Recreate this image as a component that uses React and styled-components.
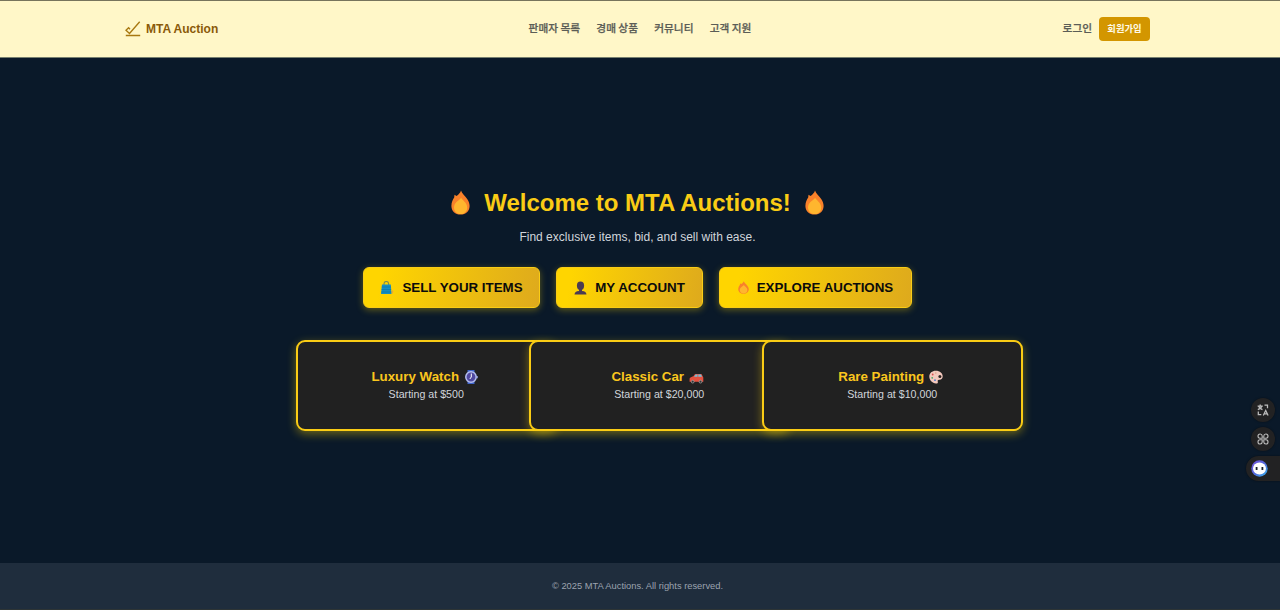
import React from "react";
import styled, { createGlobalStyle } from "styled-components";

const Global = createGlobalStyle`
  * { box-sizing: border-box; }
  body { margin: 0; background: #0a1929; font-family: "Liberation Sans", Arial, "Noto Sans CJK KR", sans-serif; }
  h1, h3, p { margin: 0; }
  svg { display: block; flex: none; }
`;

const Page = styled.div`
  height: 610px;
  display: flex;
  flex-direction: column;
  overflow: hidden;
  border-top: 1px solid #77745c;
  border-bottom: 1px solid #2d3435;
`;

const Header = styled.header`
  height: 57px;
  flex: none;
  padding-right: 5px;
  background: #fff7c8;
  border-bottom: 1px solid #77806f;
`;

const HeaderInner = styled.div`
  width: 1025px;
  height: 55px;
  margin: 0 auto;
  display: grid;
  grid-template-columns: 1fr auto 1fr;
  align-items: center;
`;

const Brand = styled.a`
  display: flex;
  align-items: center;
  gap: 5px;
  color: #8a5a08;
  font-size: 12px;
  font-weight: 700;
`;

const Nav = styled.nav`
  display: flex;
  gap: 16.3px;
  margin-left: 5px;
`;

const NavLink = styled.a`
  padding-bottom: 2px;
  color: #5b5d56;
  font: 500 10.67px/16px "Noto Sans CJK KR", sans-serif;
  -webkit-text-stroke: 0.25px #5b5d56;
  white-space: nowrap;
`;

const Account = styled.div`
  display: flex;
  justify-content: flex-end;
  align-items: center;
  gap: 7px;
`;

const SignUp = styled.button`
  width: 51px;
  height: 24px;
  padding: 0 0 1px;
  border: 0;
  border-radius: 4px;
  background: #d39600;
  color: #fffbe8;
  font: 700 9.33px/23px "Noto Sans CJK KR", sans-serif;
`;

const Hero = styled.main`
  flex: 1;
  padding: 129px 5px 0 0;
  display: flex;
  flex-direction: column;
  align-items: center;
`;

const Title = styled.h1`
  display: flex;
  align-items: center;
  gap: 14px;
  height: 32px;
  color: #facc15;
  font-size: 24px;
  line-height: 32px;
  white-space: nowrap;

  svg { margin-bottom: 1px; }
`;

const Subtitle = styled.p`
  margin-top: 9px;
  color: #d1d5db;
  font-size: 12px;
  line-height: 18px;
`;

const Actions = styled.div`
  margin-top: 21px;
  display: flex;
  gap: 16px;
`;

const Action = styled.button`
  width: ${(p) => p.$width}px;
  height: 41px;
  padding: 0;
  display: flex;
  align-items: center;
  justify-content: center;
  gap: 8px;
  border: 1.5px solid #facc15;
  border-radius: 6px;
  background: linear-gradient(100deg, #ffd500 10%, #daa520 110%);
  box-shadow: 0 2px 7px rgba(255, 215, 0, 0.35);
  color: #0b0b0b;
  font: 700 13.33px "Liberation Sans", Arial, sans-serif;
  white-space: nowrap;
`;

const Cards = styled.section`
  width: 683px;
  margin-top: 32px;
  display: grid;
  grid-template-columns: repeat(3, minmax(0, 1fr));
  gap: 16px;
`;

const Card = styled.article`
  width: 260.5px;
  height: 91px;
  padding: 26px 0;
  border: 2px solid #facc15;
  border-radius: 9px;
  background: #212121;
  box-shadow: 0 3px 10px rgba(255, 215, 0, 0.4);
  text-align: center;
`;

const CardTitle = styled.h3`
  display: flex;
  justify-content: center;
  align-items: center;
  gap: 5px;
  padding-right: 3px;
  color: #fac61e;
  font-size: 13.33px;
  line-height: 18px;
`;

const Price = styled.p`
  color: #d1d5db;
  font-size: 10.67px;
  line-height: 16px;
`;

const Footer = styled.footer`
  height: 46px;
  flex: none;
  padding-right: 5px;
  background: #1f2d3d;
  color: #9ca3af;
  font-size: 9.33px;
  line-height: 46px;
  text-align: center;
`;

const Tools = styled.aside`
  position: fixed;
  right: 0;
  top: 398px;
  display: flex;
  flex-direction: column;
  align-items: flex-end;
  gap: 5px;
`;

const Tool = styled.div`
  width: 24px;
  height: 24px;
  margin-right: 5px;
  display: grid;
  place-items: center;
  border-radius: 50%;
  background: #222223;
  box-shadow: 0 0 2px rgba(0, 0, 0, 0.5);
`;

const AssistantTab = styled(Tool)`
  width: 34px;
  height: 25px;
  margin-right: 0;
  padding-left: 5px;
  justify-items: start;
  border-radius: 13px 0 0 13px;
`;

const Gavel = () => (
  <svg width="16" height="16" viewBox="0 0 16 16" fill="none" stroke="#a87810" strokeWidth="1.35">
    <path d="M14.700.7 4.500 12.500 1 9.300 3.600 6.700 5 8.200M.8 14.500h14.400" />
  </svg>
);

const Flame = ({ w = 19, h = 25 }) => (
  <svg width={w} height={h} viewBox="0 0 19 25" preserveAspectRatio="none">
    <path d="M10 .4C11 4 14 5.500 16.200 9 17.800 11.500 18.600 13.500 18.600 16c0 5-3.800 8.600-9.100 8.600S.4 21 .4 16C.4 12 2 9.500 3.200 7.500L3.500 4.800 5.500 6C7.500 4.500 9.400 2.700 10 .4Z" fill="#f9812a" />
    <path d="M10.200 7.800c.8 2.500 6 4.700 6 9.600 0 4-2.800 6.600-6.600 6.600S3 21.300 3 17.500c0-2.700 1.200-4.200 2.700-5.700 1.800-1.700 3.500-2.300 4.500-4Z" fill="#ffb62e" />
  </svg>
);

const Bag = () => (
  <svg width="14" height="14" viewBox="0 0 14 14">
    <path d="M4 4.500V2.800a2.300 2.300 0 0 1 4.600 0v1.700" fill="none" stroke="#7b8b52" strokeWidth="1.100" />
    <path d="M2 3.500h8.800l.7 9.500H1Z" fill="#148fc4" />
    <path d="M1.800 6h9M1.600 8.500h9.500M1.300 11h10" stroke="#0877aa" strokeWidth=".7" />
    <path d="m11.800 9 1.500 1-.5 2.500h-1Z" fill="#e9a43d" />
  </svg>
);

const Person = () => (
  <svg width="13" height="14" viewBox="0 0 13 14" fill="#4b3b52">
    <ellipse cx="6.500" cy="4.800" rx="3.600" ry="4.200" />
    <path d="M5 8h3v2c3 .2 4.200 1.400 4.500 3.400H.5C.8 11.400 2 10.200 5 10Z" />
  </svg>
);

const Watch = () => (
  <svg width="14" height="14" viewBox="0 0 14 14">
    <path d="M3.500 0h7v14h-7Z" fill="#3f64c8" />
    <path d="M12.500 6h1.300v2.200h-1.300Z" fill="#8f9ee6" />
    <circle cx="7" cy="7" r="5.200" fill="#5049a0" stroke="#b5bff0" strokeWidth="1.500" />
    <path d="M7.300 3.500V7L5.800 9" fill="none" stroke="#fff" />
  </svg>
);

const Car = () => (
  <svg width="15" height="14" viewBox="0 0 15 14">
    <path d="M.6 8.500C1.500 7 3.500 6.600 4.300 6.300L6 4h6.500L14.300 7.500v4.300H.6Z" fill="#e5513f" />
    <path d="M5 6.700 6.700 4.600h1.800v2.100ZM9.300 4.600H12l1.100 2.100H9.300Z" fill="#75bdd5" />
    <circle cx="3.700" cy="11.700" r="1.400" fill="#333" stroke="#bbb" strokeWidth=".6" />
    <circle cx="11.500" cy="11.700" r="1.400" fill="#333" stroke="#bbb" strokeWidth=".6" />
  </svg>
);

const Palette = () => (
  <svg width="14" height="14" viewBox="0 0 14 14">
    <path d="M6.800.8c4.200 0 6.900 2.500 6.900 5.500 0 2.300-1.500 3.700-3.400 3.500-1.400-.1-1.900.8-1.500 1.900.4 1.200-.4 2-1.800 1.800C3.200 13.100.3 10 .3 6.500.3 3.100 3 .8 6.800.8Z" fill="#f3c8bd" />
    <circle cx="10.900" cy="6.500" r="1.500" fill="#29221f" />
    <circle cx="3.700" cy="4.500" r=".9" fill="#d94f4f" />
    <circle cx="6.800" cy="3" r=".7" fill="#d99e7a" />
    <circle cx="3.200" cy="7.800" r=".9" fill="#45a568" />
    <circle cx="6" cy="10.200" r=".9" fill="#4a77cc" />
  </svg>
);

const Translate = () => (
  <svg width="12" height="12" viewBox="0 0 12 12" fill="none" stroke="#bcbcbc" strokeWidth="1.250">
    <path d="M.6 2h5.200M3.200.5V2M.8 5.700C3.200 4.800 4.500 3.700 5 2M1.500 2.300C2.300 4 3.500 5 5.500 5.700M7.500 1.200h3v3M1.300 7.500v3h3M6.300 11.500 8.700 6.500l2.400 5M7.300 9.900h2.900" />
  </svg>
);

const Grid = () => (
  <svg width="12" height="12" viewBox="0 0 12 12" fill="none" stroke="#bcbcbc" strokeWidth="1.100">
    <path d="M5.200 5.200H3a2.100 2.100 0 1 1 2.200-2.200ZM6.800 5.200V3A2.100 2.100 0 1 1 9 5.200ZM5.200 6.800V9A2.100 2.100 0 1 1 3 6.800ZM6.800 6.800H9A2.100 2.100 0 1 1 6.800 9Z" />
  </svg>
);

const Robot = () => (
  <svg width="17" height="17" viewBox="0 0 17 17">
    <defs>
      <linearGradient id="ring" x1="0" y1="0" x2="1" y2="1">
        <stop offset="0" stopColor="#7551dc" />
        <stop offset=".5" stopColor="#5267dc" />
        <stop offset="1" stopColor="#35b6ed" />
      </linearGradient>
    </defs>
    <circle cx="8.500" cy="8.500" r="8.200" fill="url(#ring)" />
    <ellipse cx="8.500" cy="8.500" rx="6.500" ry="5.900" fill="#fff" />
    <path d="M5.600 7v3M11.400 7v3" stroke="#18202b" strokeWidth="1.800" />
  </svg>
);

const links = ["판매자 목록", "경매 상품", "커뮤니티", "고객 지원"];
const actions = [
  { label: "SELL YOUR ITEMS", width: 177, icon: <Bag /> },
  { label: "MY ACCOUNT", width: 147, icon: <Person /> },
  { label: "EXPLORE AUCTIONS", width: 193, icon: <Flame w={11} h={13} /> },
];
const items = [
  { name: "Luxury Watch", price: "$500", icon: <Watch /> },
  { name: "Classic Car", price: "$20,000", icon: <Car /> },
  { name: "Rare Painting", price: "$10,000", icon: <Palette /> },
];

export default function App() {
  return (
    <Page>
      <Global />
      <Header>
        <HeaderInner>
          <Brand><Gavel />MTA Auction</Brand>
          <Nav>{links.map((l) => <NavLink key={l}>{l}</NavLink>)}</Nav>
          <Account>
            <NavLink>로그인</NavLink>
            <SignUp>회원가입</SignUp>
          </Account>
        </HeaderInner>
      </Header>
      <Hero>
        <Title><Flame /><span>Welcome to MTA Auctions!</span><Flame /></Title>
        <Subtitle>Find exclusive items, bid, and sell with ease.</Subtitle>
        <Actions>
          {actions.map((a) => (
            <Action key={a.label} $width={a.width}>{a.icon}{a.label}</Action>
          ))}
        </Actions>
        <Cards>
          {items.map((i) => (
            <Card key={i.name}>
              <CardTitle>{i.name}{i.icon}</CardTitle>
              <Price>Starting at {i.price}</Price>
            </Card>
          ))}
        </Cards>
      </Hero>
      <Footer>© 2025 MTA Auctions. All rights reserved.</Footer>
      <Tools>
        <Tool><Translate /></Tool>
        <Tool><Grid /></Tool>
        <AssistantTab><Robot /></AssistantTab>
      </Tools>
    </Page>
  );
}
